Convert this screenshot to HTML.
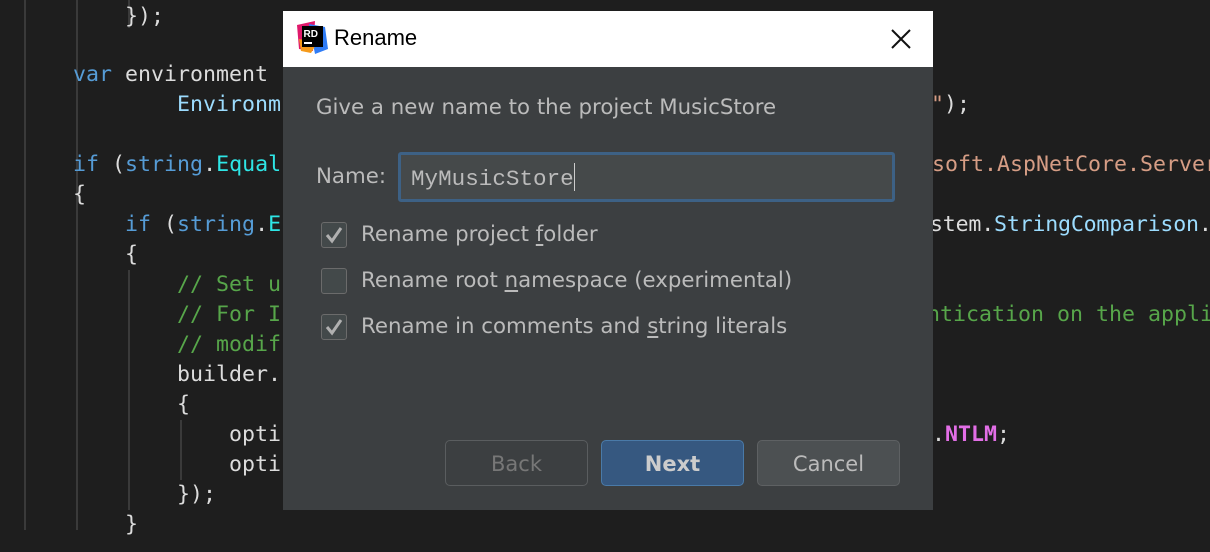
<!DOCTYPE html>
<html><head><meta charset="utf-8"><style>
html,body{margin:0;padding:0;width:1210px;height:530px;overflow:hidden;background:#1e1e1e;}
.code{position:absolute;left:21px;top:2px;font-family:"DejaVu Sans Mono","Liberation Mono",monospace;font-size:21.6px;color:#dcdcdc;white-space:pre;}
.ln{position:absolute;height:30px;line-height:30px;white-space:pre;}
.k{color:#569cd6}.c{color:#57a64a}.cy{color:#2ee6e6}.s{color:#d69d85}.t{color:#9cdcfe}.m{color:#e26ee6;font-weight:bold}
.g{position:absolute;width:2px;background:#3a3a3a;}
.dlg{position:absolute;left:283px;top:11px;width:650px;height:499px;background:#3c3f41;font-family:"DejaVu Sans","Liberation Sans",sans-serif;}
.title{position:absolute;left:0;top:0;width:650px;height:56px;background:#fff;}
.tt{position:absolute;left:51px;top:14px;font-size:22px;color:#000;font-family:"Liberation Sans",sans-serif;}
.lbl{position:absolute;font-size:21.3px;color:#bbbbbb;white-space:nowrap;}
.cb{position:absolute;left:38px;width:24px;height:24px;border:1.5px solid #6b6b6b;border-radius:3px;background:#43494a;}
.btn{position:absolute;top:429px;width:141px;height:44px;border-radius:5px;font-size:21px;text-align:center;line-height:46px;}
u{text-decoration:underline;text-underline-offset:3px}
</style></head><body>
<div class="g" style="left:24px;top:0;height:530px"></div>
<div class="g" style="left:76px;top:0;height:530px"></div>
<div class="g" style="left:128px;top:0;height:28px"></div>
<div class="g" style="left:76px;top:90px;height:28px"></div>
<div class="g" style="left:128px;top:270px;height:240px"></div>
<div class="g" style="left:180px;top:420px;height:60px"></div>
<div class="code">
<div class="ln" style="top:0">        });</div>
<div class="ln" style="top:58px">    <span class="k">var</span> environment</div>
<div class="ln" style="top:88px">            <span class="t">Environm</span></div>
<div class="ln" style="top:148px">    <span class="k">if</span> (<span class="k">string</span>.<span class="cy">Equal</span></div>
<div class="ln" style="top:178px">    {</div>
<div class="ln" style="top:208px">        <span class="k">if</span> (<span class="k">string</span>.<span class="cy">E</span></div>
<div class="ln" style="top:238px">        {</div>
<div class="ln" style="top:268px">            <span class="c">// Set u</span></div>
<div class="ln" style="top:298px">            <span class="c">// For I</span></div>
<div class="ln" style="top:328px">            <span class="c">// modif</span></div>
<div class="ln" style="top:358px">            builder.</div>
<div class="ln" style="top:388px">            {</div>
<div class="ln" style="top:418px">                opti</div>
<div class="ln" style="top:448px">                opti</div>
<div class="ln" style="top:478px">            });</div>
<div class="ln" style="top:508px">        }</div>
<div class="ln" style="top:88px;left:910px"><span class="s">"</span>);</div>
<div class="ln" style="top:148px;left:911px"><span class="s">soft.AspNetCore.Server</span></div>
<div class="ln" style="top:208px;left:909px;letter-spacing:-0.2px">stem.<span class="t">StringComparison</span>.</div>
<div class="ln" style="top:298px;left:906px"><span class="c">ntication on the appli</span></div>
<div class="ln" style="top:418px;left:911px">.<span class="m">NTLM</span>;</div>
</div>
<div class="dlg">
<div class="title">
<svg style="position:absolute;left:12px;top:10px" width="34" height="34" viewBox="0 0 34 34">
<polygon points="2,4 20,0 18,30 4,28" fill="#e0196b"/>
<polygon points="14,3 30,6 33,28 20,33" fill="#2f7cf6"/>
<polygon points="4,18 22,22 16,32 6,30" fill="#f59a1a"/>
<rect x="7" y="5" width="21" height="21" fill="#000"/>
<text x="8.5" y="16" font-family="Liberation Sans" font-weight="bold" font-size="10" fill="#fff">RD</text>
<rect x="9" y="21" width="8" height="2" fill="#fff"/>
</svg>
<div class="tt">Rename</div>
<svg style="position:absolute;left:607px;top:17px" width="22" height="22" viewBox="0 0 22 22"><path d="M2 2L20 20M20 2L2 20" stroke="#111" stroke-width="2"/></svg>
</div>
<div class="lbl" style="left:33px;top:84px">Give a new name to the project MusicStore</div>
<div class="lbl" style="left:33px;top:153px">Name:</div>
<div style="position:absolute;left:115px;top:141px;width:491px;height:44px;border:3px solid #3d6185;border-radius:3px;background:#45494a;"></div>
<div style="position:absolute;left:128px;top:152px;font-family:'Liberation Mono',monospace;font-size:22.6px;color:#bbbbbb;">MyMusicStore<span style="display:inline-block;width:1.5px;height:28px;background:#ccc;vertical-align:-6px"></span></div>
<div class="cb" style="top:211px"><svg width="24" height="24" viewBox="0 0 24 24"><path d="M5 12L10 18L19 5" stroke="#b0b0b0" stroke-width="3" fill="none"/></svg></div>
<div class="lbl" style="left:78px;top:211px">Rename project <u>f</u>older</div>
<div class="cb" style="top:257px"></div>
<div class="lbl" style="left:78px;top:257px">Rename root <u>n</u>amespace (experimental)</div>
<div class="cb" style="top:303px"><svg width="24" height="24" viewBox="0 0 24 24"><path d="M5 12L10 18L19 5" stroke="#b0b0b0" stroke-width="3" fill="none"/></svg></div>
<div class="lbl" style="left:78px;top:303px">Rename in comments and <u>s</u>tring literals</div>
<div class="btn" style="left:162px;border:1.5px solid #5a5d5f;color:#777;">Back</div>
<div class="btn" style="left:318px;border:1.5px solid #4a7aa8;background:#365880;color:#ccc;font-weight:bold;">Next</div>
<div class="btn" style="left:474px;border:1.5px solid #5e6163;background:#4c5052;color:#bbb;">Cancel</div>
</div>
</body></html>
